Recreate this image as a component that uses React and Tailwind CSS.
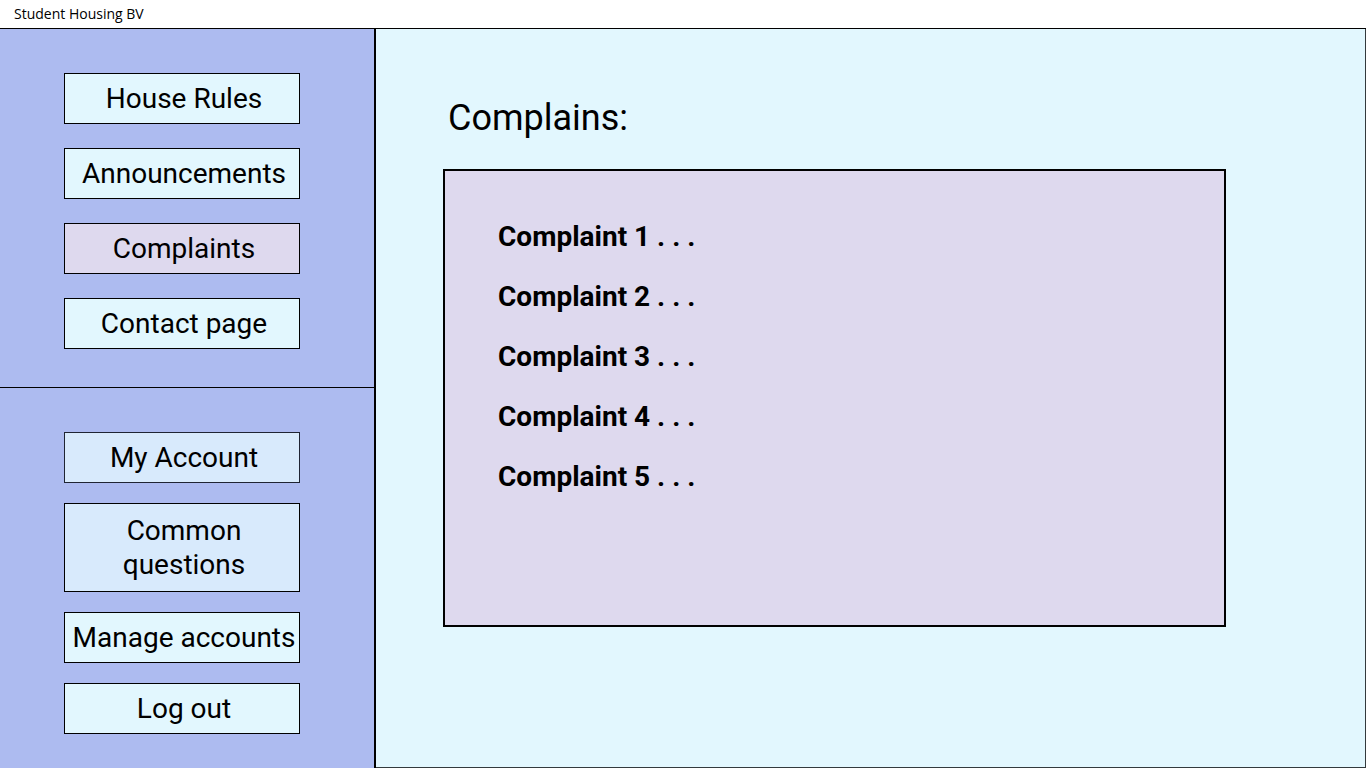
const mainLinks = [
  { label: "House Rules" },
  { label: "Announcements" },
  { label: "Complaints", active: true },
  { label: "Contact page" },
];

const accountLinks = [
  { label: "My Account", tone: "bg-[#d8eafc] border-[#1f2433]" },
  { label: "Common questions", tone: "bg-[#d8eafc] border-black", tall: true },
  { label: "Manage accounts" },
  { label: "Log out" },
];

const complaints = [1, 2, 3, 4, 5];

function NavButton({ label, active, tone, tall }) {
  const color = tone || (active ? "bg-[#ded9ee] border-black" : "bg-[#e2f7fe] border-black");
  return (
    <button
      type="button"
      aria-current={active ? "page" : undefined}
      className={`flex w-full items-center justify-center border text-center text-[28px] leading-[34px] ${
        tall ? "h-[89px] pr-11 pl-12" : "h-[51px] pl-1 whitespace-nowrap"
      } ${color}`}
    >
      {label}
    </button>
  );
}

export default function App() {
  return (
    <div className="flex min-h-screen flex-col bg-white font-['Roboto',sans-serif] text-black">
      <header className="flex h-[29px] items-center border-b border-black px-3.5">
        <span className="font-['Open_Sans',sans-serif] text-sm leading-5 font-normal">Student Housing BV</span>
      </header>
      <div className="flex flex-1">
        <aside className="flex w-[376px] shrink-0 flex-col border-r-2 border-black bg-[#adbbf0]">
          <nav aria-label="House" className="flex flex-col gap-6 border-b border-black pt-11 pr-[74px] pb-[38px] pl-16">
            {mainLinks.map((link) => (
              <NavButton key={link.label} {...link} />
            ))}
          </nav>
          <nav aria-label="Account" className="flex flex-col gap-5 pt-11 pr-[74px] pb-8 pl-16">
            {accountLinks.map((link) => (
              <NavButton key={link.label} {...link} />
            ))}
          </nav>
        </aside>
        <main className="flex-1 border-r border-b border-[#333a3d] bg-[#e2f7fe] pt-[68px] pr-[139px] pb-16 pl-[67px]">
          <h1 className="pl-[5px] text-[36px] leading-[42px]">Complains:</h1>
          <section className="mt-[30px] min-h-[458px] border-2 border-black bg-[#ded9ee] px-[53px] py-9">
            <ul>
              {complaints.map((n) => (
                <li key={n} className="text-[28px] leading-[60px] font-bold">
                  Complaint {n} . . .
                </li>
              ))}
            </ul>
          </section>
        </main>
      </div>
    </div>
  );
}
